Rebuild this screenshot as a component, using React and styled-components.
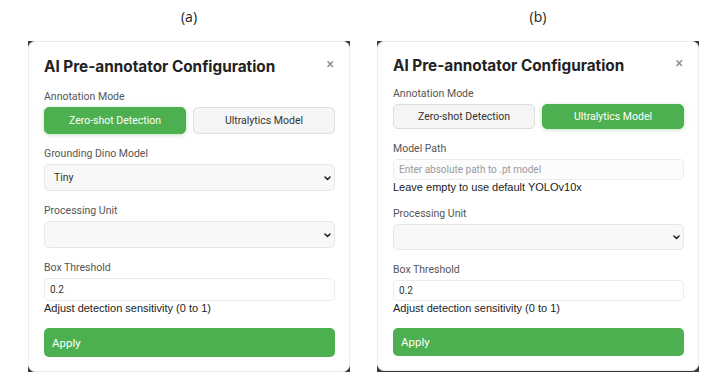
import styled, { createGlobalStyle } from "styled-components";

const GlobalStyle = createGlobalStyle`
  body {
    margin: 0;
    background: #ffffff;
    font-family: Roboto, Inter, sans-serif;
    color: #222;
  }
`;

const Page = styled.div`
  display: flex;
  gap: 27px;
  padding: 0 14px 0 28px;
  width: 713px;
  height: 383px;
  box-sizing: border-box;
`;

const Column = styled.div`
  display: flex;
  flex-direction: column;
  align-items: center;
  width: 322px;
`;

const Caption = styled.div`
  height: 41px;
  box-sizing: border-box;
  padding-top: 8px;
  font-family: "Open Sans", "Liberation Sans", sans-serif;
  font-size: 14px;
  line-height: 18px;
  color: #222;
`;

const Backdrop = styled.div`
  width: 100%;
  background: #3b3b3b;
  padding-bottom: ${({ $dense }) => ($dense ? "1px" : "0")};
`;

const Modal = styled.div`
  background: #fff;
  border-radius: 8px;
  padding: ${({ $dense }) => ($dense ? "15px" : "16px")} 15px 15px 16px;
  box-shadow: inset 0 0 0 1px #ececec;
`;

const Header = styled.div`
  display: flex;
  justify-content: space-between;
  align-items: flex-start;
  height: 20px;
`;

const Title = styled.h2`
  margin: 0;
  font-family: Inter, sans-serif;
  font-size: 15.3px;
  line-height: 20px;
  font-weight: 700;
  color: #222;
`;

const Close = styled.span`
  font-size: 14px;
  line-height: 14px;
  color: #888;
  margin-right: 1px;
  margin-top: 0;
`;

const Label = styled.label`
  display: block;
  font-size: 10.5px;
  line-height: 14px;
  color: #555;
  margin-bottom: 3px;
`;

const Field = styled.div`
  margin-top: ${({ $first, $dense }) => ($first && $dense ? "11px" : "13px")};
`;

const ModeRow = styled.div`
  display: grid;
  grid-template-columns: 1fr 1fr;
  gap: 7px;
`;

const ModeButton = styled.button`
  height: ${({ $dense }) => ($dense ? "25px" : "27px")};
  border-radius: 5px;
  font-family: Roboto, sans-serif;
  font-size: 10.5px;
  border: 1px solid ${({ $active }) => ($active ? "#4caf50" : "#dcdcdc")};
  background: ${({ $active }) => ($active ? "#4caf50" : "#f5f5f5")};
  color: ${({ $active }) => ($active ? "#fff" : "#333")};
  box-shadow: ${({ $active }) =>
    $active ? "0 1px 4px rgba(76, 175, 80, 0.35)" : "none"};
`;

const SelectWrap = styled.div`
  position: relative;
`;

const Select = styled.select`
  display: block;
  width: 100%;
  height: ${({ $h }) => $h}px;
  box-sizing: border-box;
  appearance: none;
  border: 1px solid #e6e6e6;
  border-radius: 5px;
  background: #f8f8f8;
  padding: 0 9px;
  font-family: Roboto, sans-serif;
  font-size: 10.5px;
  color: #333;
`;

const Chevron = styled.svg`
  position: absolute;
  right: 4px;
  top: 50%;
  width: 7px;
  height: 5px;
  margin-top: -2px;
  pointer-events: none;
`;

const TextInput = styled.input`
  display: block;
  width: 100%;
  height: ${({ $h }) => $h}px;
  box-sizing: border-box;
  border: 1px solid #ececec;
  border-radius: 4px;
  background: ${({ $soft }) => ($soft ? "#fcfcfc" : "#fff")};
  padding: 0 5px;
  font-family: Roboto, sans-serif;
  font-size: 10px;
  color: #333;

  &::placeholder {
    color: #9a9a9a;
  }
`;

const Help = styled.div`
  font-family: "Liberation Sans", Arial, sans-serif;
  font-size: 11px;
  line-height: 14px;
  color: #222;
`;

const ApplyButton = styled.button`
  display: block;
  width: 100%;
  margin-top: 13px;
  height: ${({ $dense }) => ($dense ? "28px" : "29px")};
  border: none;
  border-radius: 5px;
  background: #4caf50;
  color: #fff;
  text-align: left;
  padding: 0 8px;
  font-family: Roboto, sans-serif;
  font-size: 11.5px;
`;

function Dropdown({ height, children, ...rest }) {
  return (
    <SelectWrap>
      <Select $h={height} {...rest}>
        {children}
      </Select>
      <Chevron viewBox="0 0 7 5">
        <path
          d="M1 1l2.5 2.5L6 1"
          fill="none"
          stroke="#222"
          strokeWidth="1.6"
          strokeLinecap="round"
          strokeLinejoin="round"
        />
      </Chevron>
    </SelectWrap>
  );
}

function ConfigPanel({ mode, dense }) {
  const ultra = mode === "ultralytics";
  return (
    <Backdrop $dense={dense}>
      <Modal $dense={dense}>
        <Header>
          <Title>AI Pre-annotator Configuration</Title>
          <Close>×</Close>
        </Header>

        <Field $first $dense={dense}>
          <Label>Annotation Mode</Label>
          <ModeRow>
            <ModeButton $active={!ultra} $dense={dense}>
              Zero-shot Detection
            </ModeButton>
            <ModeButton $active={ultra} $dense={dense}>
              Ultralytics Model
            </ModeButton>
          </ModeRow>
        </Field>

        {ultra ? (
          <Field>
            <Label>Model Path</Label>
            <TextInput
              $h={21}
              $soft
              placeholder="Enter absolute path to .pt model"
            />
            <Help>Leave empty to use default YOLOv10x</Help>
          </Field>
        ) : (
          <Field>
            <Label>Grounding Dino Model</Label>
            <Dropdown height={27} defaultValue="tiny">
              <option value="tiny">Tiny</option>
              <option value="base">Base</option>
            </Dropdown>
          </Field>
        )}

        <Field>
          <Label>Processing Unit</Label>
          <Dropdown height={dense ? 26 : 27} />
        </Field>

        <Field>
          <Label>Box Threshold</Label>
          <TextInput $h={dense ? 21 : 23} defaultValue="0.2" readOnly />
          <Help>Adjust detection sensitivity (0 to 1)</Help>
        </Field>

        <ApplyButton $dense={dense}>Apply</ApplyButton>
      </Modal>
    </Backdrop>
  );
}

export default function App() {
  return (
    <>
      <GlobalStyle />
      <Page>
        <Column>
          <Caption>(a)</Caption>
          <ConfigPanel mode="zero-shot" />
        </Column>
        <Column>
          <Caption>(b)</Caption>
          <ConfigPanel mode="ultralytics" dense />
        </Column>
      </Page>
    </>
  );
}
